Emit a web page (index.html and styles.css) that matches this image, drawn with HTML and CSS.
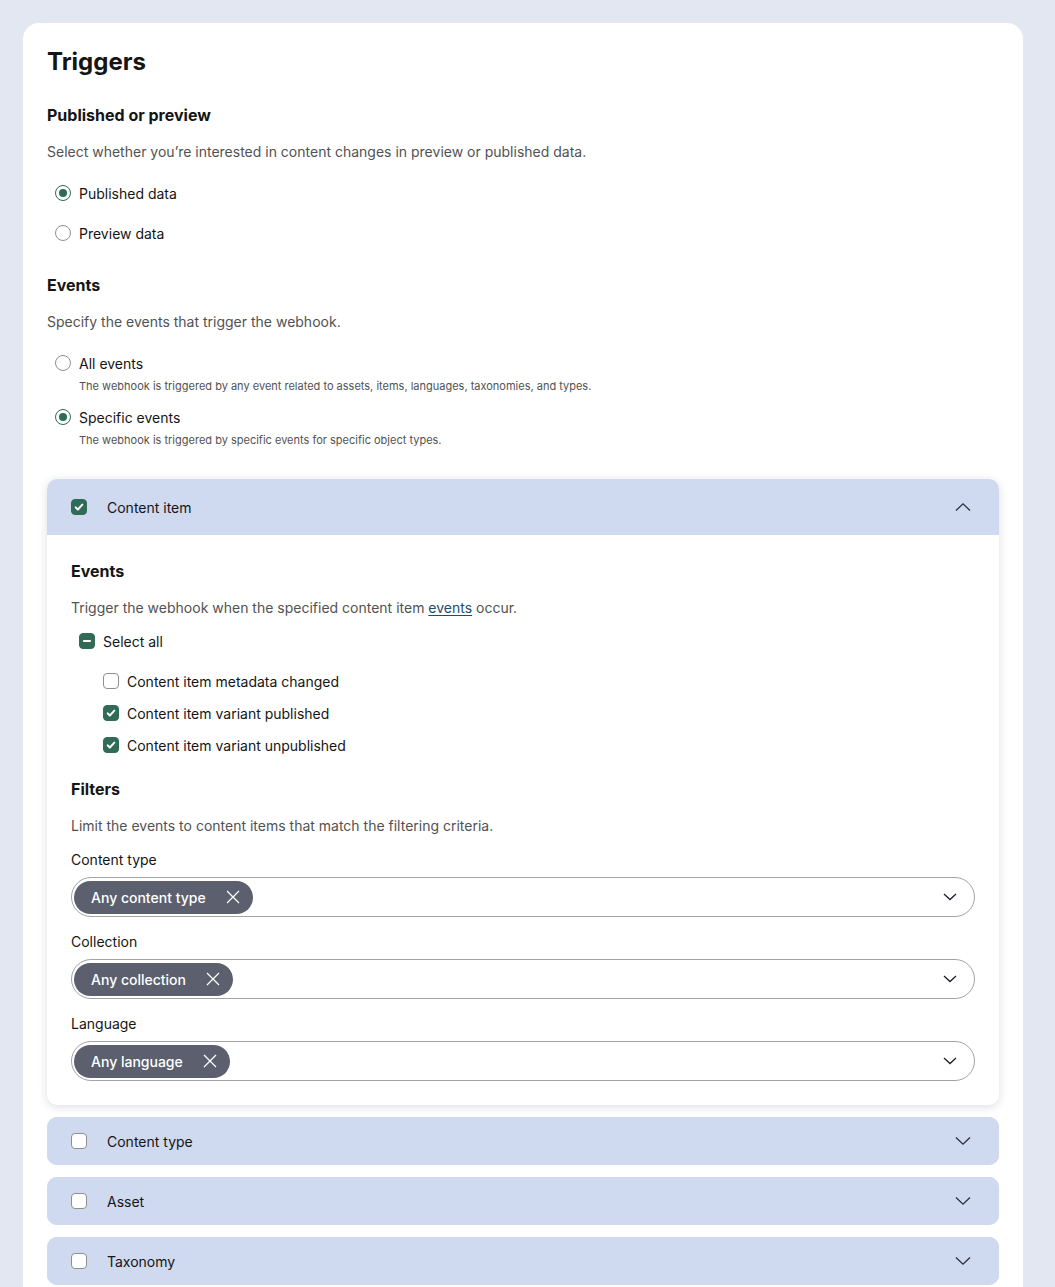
FILE: index.html
```html
<!DOCTYPE html>
<html lang="en">
<head>
<meta charset="utf-8">
<title>Triggers</title>
<link rel="stylesheet" href="styles.css">
</head>
<body>
<main class="card">
  <h1 class="title">Triggers</h1>

  <section class="group">
    <h2 class="heading">Published or preview</h2>
    <p class="desc">Select whether you’re interested in content changes in preview or published data.</p>
    <div class="radios">
      <label class="radio-row"><span class="radio checked"></span><span class="label">Published data</span></label>
      <label class="radio-row"><span class="radio"></span><span class="label">Preview data</span></label>
    </div>
  </section>

  <section class="group">
    <h2 class="heading">Events</h2>
    <p class="desc">Specify the events that trigger the webhook.</p>
    <div class="radios tight">
      <div class="radio-opt">
        <label class="radio-row"><span class="radio"></span><span class="label">All events</span></label>
        <p class="hint">The webhook is triggered by any event related to assets, items, languages, taxonomies, and types.</p>
      </div>
      <div class="radio-opt">
        <label class="radio-row"><span class="radio checked"></span><span class="label">Specific events</span></label>
        <p class="hint">The webhook is triggered by specific events for specific object types.</p>
      </div>
    </div>
  </section>

  <div class="accordion">
    <div class="acc-item open">
      <div class="acc-head">
        <span class="cb checked"><svg viewBox="0 0 16 16" width="16" height="16"><path d="M4.2 8.4l2.5 2.5 5.1-5.6" fill="none" stroke="#fff" stroke-width="2.3" stroke-linecap="round" stroke-linejoin="round"/></svg></span>
        <span class="acc-label">Content item</span>
        <svg class="chev" viewBox="0 0 16 10" width="16" height="10"><path d="M1 8.5L8 1.8l7 6.7" fill="none" stroke="#2a2f3e" stroke-width="1.3"/></svg>
      </div>
      <div class="acc-body">
        <h2 class="heading">Events</h2>
        <p class="desc">Trigger the webhook when the specified content item <a href="#" class="link">events</a> occur.</p>
        <div class="checks">
          <label class="cb-row"><span class="cb checked"><svg viewBox="0 0 16 16" width="16" height="16"><path d="M4.5 8h7" stroke="#fff" stroke-width="2.4" stroke-linecap="round"/></svg></span><span class="label">Select all</span></label>
          <div class="sub-checks">
            <label class="cb-row"><span class="cb"></span><span class="label">Content item metadata changed</span></label>
            <label class="cb-row"><span class="cb checked"><svg viewBox="0 0 16 16" width="16" height="16"><path d="M4.2 8.4l2.5 2.5 5.1-5.6" fill="none" stroke="#fff" stroke-width="2.3" stroke-linecap="round" stroke-linejoin="round"/></svg></span><span class="label">Content item variant published</span></label>
            <label class="cb-row"><span class="cb checked"><svg viewBox="0 0 16 16" width="16" height="16"><path d="M4.2 8.4l2.5 2.5 5.1-5.6" fill="none" stroke="#fff" stroke-width="2.3" stroke-linecap="round" stroke-linejoin="round"/></svg></span><span class="label">Content item variant unpublished</span></label>
          </div>
        </div>

        <h2 class="heading filters">Filters</h2>
        <p class="desc">Limit the events to content items that match the filtering criteria.</p>

        <div class="field">
          <div class="field-label">Content type</div>
          <div class="select">
            <span class="chip">Any content type<svg class="x" viewBox="0 0 14 14" width="14" height="14"><path d="M1 1l12 12M13 1L1 13" stroke="#fff" stroke-width="1.3"/></svg></span>
            <svg class="sel-chev" viewBox="0 0 14 8" width="14" height="8"><path d="M1 1l6 5.6L13 1" fill="none" stroke="#1c1f29" stroke-width="1.3"/></svg>
          </div>
        </div>
        <div class="field">
          <div class="field-label">Collection</div>
          <div class="select">
            <span class="chip">Any collection<svg class="x" viewBox="0 0 14 14" width="14" height="14"><path d="M1 1l12 12M13 1L1 13" stroke="#fff" stroke-width="1.3"/></svg></span>
            <svg class="sel-chev" viewBox="0 0 14 8" width="14" height="8"><path d="M1 1l6 5.6L13 1" fill="none" stroke="#1c1f29" stroke-width="1.3"/></svg>
          </div>
        </div>
        <div class="field">
          <div class="field-label">Language</div>
          <div class="select">
            <span class="chip">Any language<svg class="x" viewBox="0 0 14 14" width="14" height="14"><path d="M1 1l12 12M13 1L1 13" stroke="#fff" stroke-width="1.3"/></svg></span>
            <svg class="sel-chev" viewBox="0 0 14 8" width="14" height="8"><path d="M1 1l6 5.6L13 1" fill="none" stroke="#1c1f29" stroke-width="1.3"/></svg>
          </div>
        </div>
      </div>
    </div>

    <div class="acc-item">
      <div class="acc-head">
        <span class="cb"></span>
        <span class="acc-label">Content type</span>
        <svg class="chev" viewBox="0 0 16 10" width="16" height="10"><path d="M1 1.5l7 6.7 7-6.7" fill="none" stroke="#2a2f3e" stroke-width="1.3"/></svg>
      </div>
    </div>
    <div class="acc-item">
      <div class="acc-head">
        <span class="cb"></span>
        <span class="acc-label">Asset</span>
        <svg class="chev" viewBox="0 0 16 10" width="16" height="10"><path d="M1 1.5l7 6.7 7-6.7" fill="none" stroke="#2a2f3e" stroke-width="1.3"/></svg>
      </div>
    </div>
    <div class="acc-item">
      <div class="acc-head">
        <span class="cb"></span>
        <span class="acc-label">Taxonomy</span>
        <svg class="chev" viewBox="0 0 16 10" width="16" height="10"><path d="M1 1.5l7 6.7 7-6.7" fill="none" stroke="#2a2f3e" stroke-width="1.3"/></svg>
      </div>
    </div>
  </div>
</main>
</body>
</html>
```
FILE: styles.css
```css
* { box-sizing: border-box; }
html, body { margin: 0; padding: 0; }
body {
  background: #e3e7f1;
  font-family: Inter, "Noto Sans", sans-serif;
  color: #151515;
  height: 1287px;
  overflow: hidden;
}
.card {
  width: 1000px;
  margin: 23px 0 0 23px;
  background: #fff;
  border-radius: 16px;
  padding: 24px 24px 40px;
  min-height: 1300px;
}
.title {
  margin: 0;
  font-size: 24px;
  line-height: 30px;
  font-weight: 700;
}
.group { margin-top: 26px; }
.group + .group { margin-top: 28px; }
.heading {
  margin: 0;
  font-size: 16px;
  line-height: 24px;
  font-weight: 700;
}
.desc {
  margin: 15px 0 0;
  font-size: 14px;
  line-height: 20px;
  color: #525252;
}
.radios {
  margin-top: 19px;
  padding-left: 8px;
  display: flex;
  flex-direction: column;
  gap: 16px;
}
.radios.tight { gap: 11px; }
.radio-row {
  display: flex;
  align-items: center;
  gap: 8px;
  height: 24px;
  font-size: 14px;
  color: #151515;
}
.radio {
  width: 16px;
  height: 16px;
  border-radius: 50%;
  border: 1px solid #8f8f8f;
  background: #fff;
  display: flex;
  align-items: center;
  justify-content: center;
  flex: none;
}
.radio.checked { border-color: #2f6b55; }
.radio.checked::after {
  content: "";
  width: 8px;
  height: 8px;
  border-radius: 50%;
  background: #2f6b55;
}
.hint {
  margin: 3px 0 0 24px;
  font-size: 11px;
  line-height: 16px;
  color: #525252;
}
.accordion {
  margin-top: 31px;
  display: flex;
  flex-direction: column;
  gap: 12px;
}
.acc-item {
  border-radius: 10px;
  background: #cfd9ef;
}
.acc-item.open {
  background: #fff;
  box-shadow: 0 2px 10px rgba(20, 30, 60, 0.14);
}
.acc-head {
  height: 48px;
  display: flex;
  align-items: center;
  padding: 0 28px 0 24px;
  background: #cfd9ef;
  border-radius: 10px;
}
.open .acc-head {
  height: 56px;
  border-radius: 10px 10px 0 0;
}
.acc-label {
  margin-left: 20px;
  font-size: 14px;
  flex: 1;
}
.chev { flex: none; }
.cb {
  width: 16px;
  height: 16px;
  border-radius: 4px;
  border: 1px solid #8f8f8f;
  background: #fff;
  flex: none;
  display: flex;
  align-items: center;
  justify-content: center;
}
.cb svg { display: block; }
.cb.checked {
  background: #2f6b55;
  border-color: #2f6b55;
}
.acc-body {
  padding: 24px 24px 24px;
}
.acc-body .desc { margin-top: 15px; }
.link { color: #1d4d6b; text-decoration: underline; text-underline-offset: 2px; }
.checks { margin-top: 11px; padding-left: 8px; }
.cb-row {
  display: flex;
  align-items: center;
  gap: 8px;
  height: 24px;
  font-size: 14px;
}
.sub-checks {
  margin-top: 16px;
  padding-left: 24px;
  display: flex;
  flex-direction: column;
  gap: 8px;
}
.heading.filters { margin-top: 20px; }
.field { margin-top: 14px; }
.field + .field { margin-top: 15px; }
.field-label {
  font-size: 14px;
  line-height: 20px;
}
.select {
  margin-top: 7px;
  height: 40px;
  border: 1px solid #a3a3a3;
  border-radius: 20px;
  display: flex;
  align-items: center;
  padding: 0 16px 0 2px;
}
.chip {
  height: 33px;
  border-radius: 17px;
  background: #5b5f6e;
  color: #fff;
  font-size: 14px;
  font-weight: 500;
  display: flex;
  align-items: center;
  padding: 0 13px 0 17px;
  gap: 20px;
}
.chip .x { display: block; }
.sel-chev { margin-left: auto; margin-right: 1px; }
```
